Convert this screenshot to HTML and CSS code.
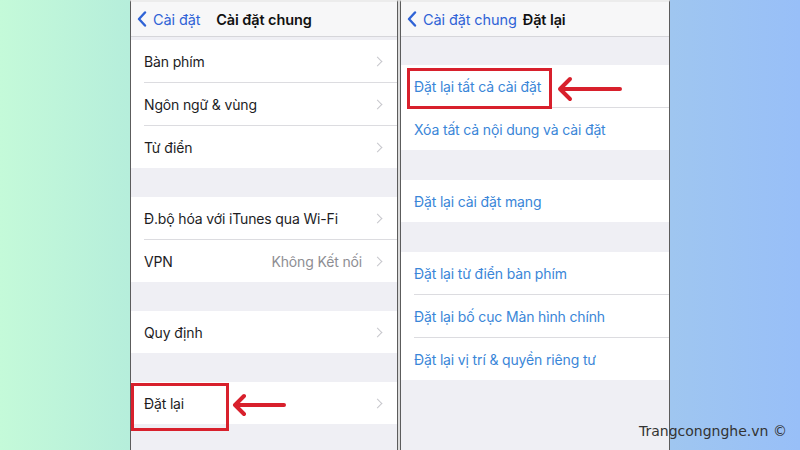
FILE: index.html
```html
<!DOCTYPE html>
<html>
<head>
	<title>Đặt lại cài đặt</title>
	<link rel="stylesheet" href="styles.css">
</head>
<body>
	<div class="stage">
		<div class="phone phone-left">
			<div class="nav">
				<span class="back">
					<svg width="10" height="16" viewBox="0 0 10 16"><polyline points="8,1.5 2,8 8,14.5" fill="none" stroke="#2f63d6" stroke-width="2.4" stroke-linecap="round" stroke-linejoin="round"/></svg>
					Cài đặt
				</span>
				<span class="title title-center">Cài đặt chung</span>
			</div>
			<div class="gap gap-small"></div>
			<div class="group">
				<div class="row"><span>Bàn phím</span><span class="chev"></span></div>
				<div class="row"><span>Ngôn ngữ &amp; vùng</span><span class="chev"></span></div>
				<div class="row"><span>Từ điển</span><span class="chev"></span></div>
			</div>
			<div class="gap"></div>
			<div class="group">
				<div class="row"><span>Đ.bộ hóa với iTunes qua Wi-Fi</span><span class="chev"></span></div>
				<div class="row"><span>VPN</span><span class="value">Không Kết nối</span><span class="chev"></span></div>
			</div>
			<div class="gap"></div>
			<div class="group">
				<div class="row"><span>Quy định</span><span class="chev"></span></div>
			</div>
			<div class="gap"></div>
			<div class="group">
				<div class="row"><span>Đặt lại</span><span class="chev"></span></div>
			</div>
			<div class="mark mark-left"></div>
			<svg class="arrow arrow-left" width="56" height="24" viewBox="0 0 56 24"><path d="M53 12 H6 M13 3 L4 12 L13 21" fill="none" stroke="#d8202c" stroke-width="4" stroke-linecap="round" stroke-linejoin="round"/></svg>
		</div>
		<div class="phone phone-right">
			<div class="nav">
				<span class="back">
					<svg width="10" height="16" viewBox="0 0 10 16"><polyline points="8,1.5 2,8 8,14.5" fill="none" stroke="#2f63d6" stroke-width="2.4" stroke-linecap="round" stroke-linejoin="round"/></svg>
					Cài đặt chung
				</span>
				<span class="title">Đặt lại</span>
			</div>
			<div class="gap gap-top"></div>
			<div class="group">
				<div class="row link"><span>Đặt lại tất cả cài đặt</span></div>
				<div class="row link"><span>Xóa tất cả nội dung và cài đặt</span></div>
			</div>
			<div class="gap gap-wide"></div>
			<div class="group">
				<div class="row link"><span>Đặt lại cài đặt mạng</span></div>
			</div>
			<div class="gap gap-wide"></div>
			<div class="group">
				<div class="row link"><span>Đặt lại từ điển bàn phím</span></div>
				<div class="row link"><span>Đặt lại bố cục Màn hình chính</span></div>
				<div class="row link"><span>Đặt lại vị trí &amp; quyền riêng tư</span></div>
			</div>
			<div class="mark mark-right"></div>
			<svg class="arrow arrow-right" width="68" height="26" viewBox="0 0 68 26"><path d="M64 13 H6 M14 3 L4 13 L14 23" fill="none" stroke="#d8202c" stroke-width="4" stroke-linecap="round" stroke-linejoin="round"/></svg>
		</div>
	</div>
	<div class="watermark">Trangcongnghe.vn ©</div>
</body>
</html>
```

FILE: styles.css
```css
html, body {
	margin: 0;
	padding: 0;
}
body {
	width: 800px;
	height: 450px;
	overflow: hidden;
	position: relative;
	font-family: Inter, "Noto Sans", sans-serif;
	background: linear-gradient(to right, #c4fad9 0%, #b6eedb 16%, #9fc6f0 84%, #98bff8 100%);
}
.stage {
	display: flex;
	height: 450px;
	padding-left: 130px;
}
.phone {
	position: relative;
	display: flex;
	flex-direction: column;
	height: 448px;
	border-top: 2px solid #ececec;
	border-left: 1px solid #5c5c5c;
	border-right: 1px solid #5c5c5c;
	background: #efeff4;
	overflow: hidden;
}
.phone-left {
	width: 266px;
}
.phone-right {
	width: 268px;
	box-shadow: -2px 0 0 #dcdcdc;
	margin-left: 2px;
}
.nav {
	display: flex;
	align-items: center;
	height: 34px;
	flex-shrink: 0;
	padding: 0 6px;
	position: relative;
	background: #f7f7f8;
	border-bottom: 1px solid #d6d6da;
	font-size: 14.5px;
	letter-spacing: -0.1px;
}
.back {
	display: flex;
	align-items: center;
	gap: 6px;
	color: #2f63d6;
}
.title {
	font-weight: 600;
	color: #111;
	margin-left: 6px;
}
.title-center {
	position: absolute;
	left: 0;
	right: 0;
	text-align: center;
	margin: 0;
}
.gap {
	height: 29px;
	flex-shrink: 0;
}
.gap-small {
	height: 3px;
}
.gap-top {
	height: 28px;
}
.gap-wide {
	height: 30px;
}
.group {
	background: #fff;
	flex-shrink: 0;
}
.row {
	display: flex;
	align-items: center;
	height: 42px;
	margin-left: 13px;
	padding-right: 14px;
	border-top: 1px solid #dcdce0;
	font-size: 14px;
	letter-spacing: -0.15px;
	color: #1d1d1f;
}
.row:first-child {
	border-top: none;
}
.row span:first-child {
	flex: 1;
}
.link {
	color: #3a86d8;
}
.value {
	color: #8e8e93;
	margin-right: 12px;
}
.chev {
	width: 6px;
	height: 6px;
	border-top: 1.5px solid #c7c7cc;
	border-right: 1.5px solid #c7c7cc;
	transform: rotate(45deg);
	margin-right: 2px;
}
.mark {
	position: absolute;
	border: 3px solid #d8202c;
}
.mark-left {
	left: 0;
	top: 381px;
	width: 92px;
	height: 42px;
}
.mark-right {
	left: 6px;
	top: 66px;
	width: 139px;
	height: 35px;
}
.arrow {
	position: absolute;
}
.arrow-left {
	left: 100px;
	top: 391px;
}
.arrow-right {
	left: 155px;
	top: 74px;
}
.watermark {
	position: absolute;
	left: 639px;
	top: 423px;
	font-family: "DejaVu Sans", sans-serif;
	font-size: 14px;
	color: #333;
}
```
